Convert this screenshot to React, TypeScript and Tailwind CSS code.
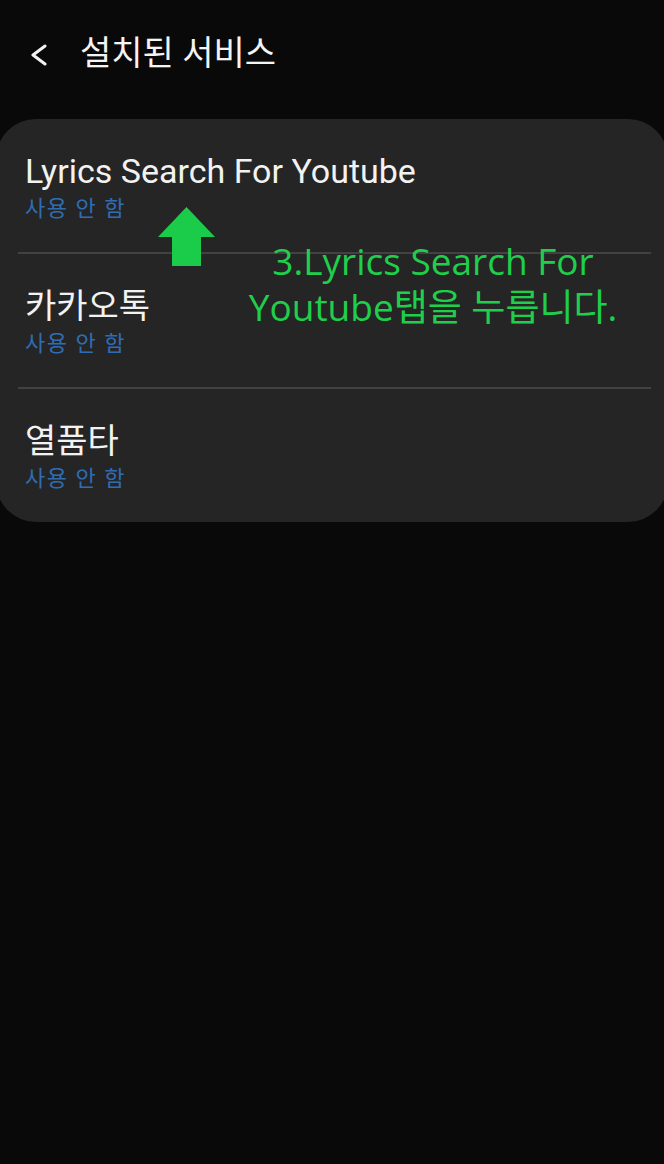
const services = [
  { name: "Lyrics Search For Youtube", status: "사용 안 함" },
  { name: "카카오톡", status: "사용 안 함" },
  { name: "열품타", status: "사용 안 함" },
];

const font = { fontFamily: '"Roboto", "Noto Sans CJK KR", sans-serif' };

export default function App() {
  return (
    <div className="relative w-[664px] h-[1164px] bg-[#090909] overflow-hidden" style={font}>
      {/* Header */}
      <div className="flex items-center h-[100px] pl-[28px] pt-[6px]">
        <svg width="20" height="22" viewBox="0 0 20 22" className="shrink-0 mt-[4px]">
          <path d="M17 2 L5 11 L17 20" fill="none" stroke="#f2f2f2" strokeWidth="3" strokeLinecap="round" strokeLinejoin="round" />
        </svg>
        <h1 className="ml-[32px] text-[34px] leading-[40px] text-[#f4f4f4]">설치된 서비스</h1>
      </div>

      {/* Card */}
      <div className="mt-[19px] -mx-[4px] rounded-[40px] bg-[#252525]">
        {services.map((s, i) => (
          <div key={s.name}>
            <div className="h-[133px] pl-[29px] pt-[33px]">
              <div className="text-[34px] leading-[38px] text-[#f2f2f2]">{s.name}</div>
              <div className="mt-[5px] text-[22px] leading-[28px] tracking-[1.5px] text-[#2f6db3]">{s.status}</div>
            </div>
            {i < services.length - 1 && <div className="ml-[22px] mr-[17px] h-[2px] bg-[#424242]" />}
          </div>
        ))}
      </div>

      {/* Annotation */}
      <svg className="absolute left-[158px] top-[207px]" width="57" height="59" viewBox="0 0 57 59">
        <polygon points="28.5,0 57,30 43,30 43,59 14,59 14,30 0,30" fill="#1acc49" />
      </svg>
      <div
        className="absolute left-[232px] top-[238px] w-[402px] text-center text-[37px] leading-[46px] text-[#1fcf4b]"
        style={{ fontFamily: '"Open Sans", "Noto Sans CJK KR", sans-serif' }}
      >
        3.Lyrics Search For
        <br />
        Youtube탭을 누릅니다.
      </div>
    </div>
  );
}
